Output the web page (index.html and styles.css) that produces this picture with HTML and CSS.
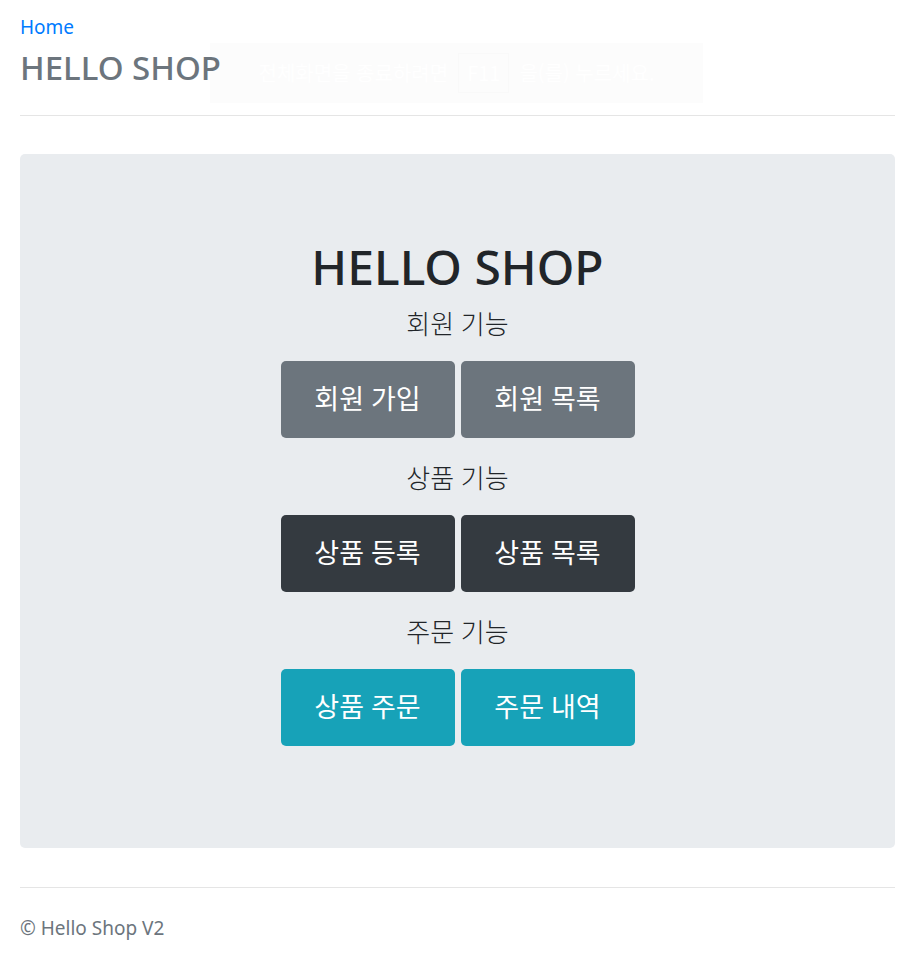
FILE: index.html
```html
<!DOCTYPE html>
<html lang="ko">
<head>
<meta charset="utf-8">
<title>HELLO SHOP</title>
<link rel="stylesheet" href="styles.css">
</head>
<body>
<div class="container">
  <header class="header">
    <a class="home" href="#">Home</a>
    <h3 class="brand">HELLO SHOP</h3>
  </header>
  <main class="jumbotron">
    <h1 class="title">HELLO SHOP</h1>
    <p class="label">회원 기능</p>
    <div class="row">
      <a class="btn btn-secondary" href="#">회원 가입</a>
      <a class="btn btn-secondary" href="#">회원 목록</a>
    </div>
    <p class="label">상품 기능</p>
    <div class="row">
      <a class="btn btn-dark" href="#">상품 등록</a>
      <a class="btn btn-dark" href="#">상품 목록</a>
    </div>
    <p class="label">주문 기능</p>
    <div class="row">
      <a class="btn btn-info" href="#">상품 주문</a>
      <a class="btn btn-info" href="#">주문 내역</a>
    </div>
  </main>
  <footer class="footer">
    <p>&copy; Hello Shop V2</p>
  </footer>
</div>
<div class="fs-notice">
  <span>전체화면을 종료하려면</span>
  <span class="key">F11</span>
  <span>을(를) 누르세요.</span>
</div>
</body>
</html>
```

FILE: styles.css
```css
html, body {
  margin: 0;
  padding: 0;
  background: #fff;
}
body {
  font-family: "Noto Sans", "Open Sans", "Noto Sans CJK KR", sans-serif;
  color: #212529;
  font-size: 19px;
  line-height: 1.5;
}
.container {
  padding: 0 28px 0 20px;
}
.header {
  padding-top: 13px;
  padding-bottom: 28px;
  border-bottom: 1px solid #e5e5e5;
}
.home {
  display: block;
  color: #007bff;
  text-decoration: none;
  line-height: 28px;
  font-size: 19px;
}
.brand {
  margin: 8px 0 0;
  font-size: 33px;
  line-height: 38px;
  font-weight: 500;
  color: #6c757d;
}
.jumbotron {
  margin-top: 38px;
  background: #e9ecef;
  border-radius: 5px;
  padding: 86px 32px 102px;
  display: flex;
  flex-direction: column;
  align-items: center;
}
.title {
  margin: 0 0 13px;
  font-size: 48px;
  line-height: 54px;
  font-weight: 500;
  color: #212529;
}
.label {
  margin: 0 0 20px;
  font-size: 26px;
  line-height: 34px;
  font-weight: 300;
  color: #212529;
}
.row {
  display: flex;
  gap: 6px;
  margin-bottom: 23px;
}
.row:last-child {
  margin-bottom: 0;
}
.btn {
  width: 174px;
  height: 77px;
  box-sizing: border-box;
  border-radius: 5px;
  display: flex;
  align-items: center;
  justify-content: center;
  color: #fff;
  text-decoration: none;
  font-size: 27px;
}
.btn-secondary { background: #6c757d; }
.btn-dark { background: #343a40; }
.btn-info { background: #17a2b8; }
.footer {
  margin-top: 39px;
  border-top: 1px solid #e5e5e5;
  padding-top: 26px;
}
.footer p {
  margin: 0 0 16px;
  color: #6c757d;
  font-size: 19px;
  line-height: 28px;
}
.fs-notice {
  position: absolute;
  left: 210px;
  top: 43px;
  width: 493px;
  height: 60px;
  box-sizing: border-box;
  background: rgba(0, 0, 0, 0.012);
  display: flex;
  align-items: center;
  justify-content: center;
  gap: 10px;
  color: #fff;
  font-family: "Noto Sans CJK KR", sans-serif;
  font-size: 20px;
}
.fs-notice .key {
  border: 1px solid rgba(0, 0, 0, 0.01);
  padding: 6px 8px;
  line-height: 26px;
}
```
